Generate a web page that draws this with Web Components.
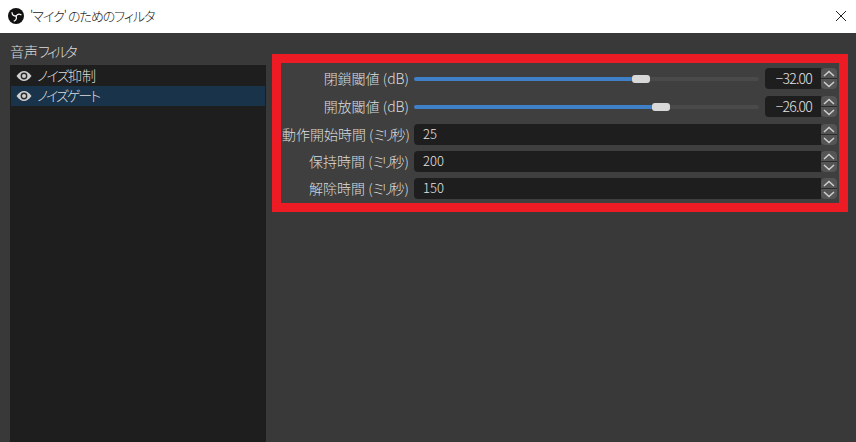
<!DOCTYPE html>
<html lang="ja"><head><meta charset="utf-8"><title>Filters</title>
<style>
html,body{margin:0;padding:0;width:856px;height:442px;overflow:hidden;background:#3a3939}
body{font:300 14px "Noto Sans CJK JP","Noto Sans",sans-serif;color:#dcdcdc;font-feature-settings:"palt"}
</style></head><body>
<obs-window>
  <obs-titlebar slot="top">'マイク' のためのフィルタ</obs-titlebar>
  <obs-filter-list slot="left" heading="音声フィルタ">
    <obs-filter-item>ノイズ抑制</obs-filter-item>
    <obs-filter-item selected>ノイズゲート</obs-filter-item>
  </obs-filter-list>
  <obs-props slot="right">
    <obs-row label="閉鎖閾値 (dB)"><obs-slider pct="63.5"></obs-slider><obs-spin value="-32.00" w="72" align="right"></obs-spin></obs-row>
    <obs-row label="開放閾値 (dB)"><obs-slider pct="69.3"></obs-slider><obs-spin value="-26.00" w="72" align="right"></obs-spin></obs-row>
    <obs-row label="動作開始時間 (ミリ秒)"><obs-spin value="25"></obs-spin></obs-row>
    <obs-row label="保持時間 (ミリ秒)"><obs-spin value="200"></obs-spin></obs-row>
    <obs-row label="解除時間 (ミリ秒)"><obs-spin value="150"></obs-spin></obs-row>
  </obs-props>
</obs-window>
<script>
const kana=(s,ls)=>s.replace(/[ァ-ヶー]+/g,m=>'<span style="letter-spacing:'+ls+'px">'+m+'</span>');
function def(name, css, html, lightInit){
  customElements.define(name, class extends HTMLElement{
    connectedCallback(){
      if(this.shadowRoot) return;
      if(lightInit) lightInit(this);
      const r=this.attachShadow({mode:'open'});
      r.innerHTML='<style>'+css+'</style>'+(typeof html==='function'?html(this):html);
    }
  });
}
def('obs-window',
 ':host{display:flex;flex-direction:column;width:856px;height:442px}'+
 '.body{flex:1;display:flex;min-height:0;background:#3a3939}',
 '<slot name="top"></slot><div class="body"><slot name="left"></slot><slot name="right"></slot></div>');
def('obs-titlebar',
 ':host{display:flex;align-items:center;height:33px;background:#fff;color:#222;flex:none;font-size:13px;letter-spacing:-1px}'+
 '.logo{width:16px;height:16px;margin:0 6px 0 8px;flex:none;position:relative;top:-1px}'+
 '.t{flex:1;position:relative;top:-1px;white-space:pre}'+
 '.x{width:12px;height:12px;margin-right:9px;flex:none;position:relative;top:-1px}',
 '<svg class="logo" viewBox="0 0 16 16"><circle cx="8" cy="8" r="8" fill="#111"/><g fill="none" stroke="#fff" stroke-width="1.2" stroke-linecap="round"><path d="M8 8C6 8 4.2 6.6 4 4.6"/><path d="M8 8C9.2 6.4 11.4 5.8 13 6.8"/><path d="M8 8C8.8 9.8 8 12 6.2 13"/></g></svg>'+
 '<span class="t"><slot></slot></span>'+
 '<svg class="x" viewBox="0 0 12 12"><path d="M1 1L11 11M11 1L1 11" stroke="#222" stroke-width="1" fill="none"/></svg>');
def('obs-filter-list',
 ':host{display:flex;flex-direction:column;width:256px;margin-left:10px;flex:none}'+
 '.h{height:32px;line-height:37px;color:#dcdcdc}'+
 '.l{flex:1;background:#1f1e1e;padding:1px;display:flex;flex-direction:column}',
 el=>'<div class="h">'+kana(el.getAttribute('heading'),-2.6)+'</div><div class="l"><slot></slot></div>');
def('obs-filter-item',
 ':host{display:flex;align-items:center;height:20px;color:#dcdcdc}'+
 ':host([selected]){background:#19334a}'+
 'svg{width:16px;height:10px;margin:0 5px 0 5px;flex:none}'+
 'span{position:relative;top:-1px}',
 '<svg viewBox="0 0 16 10"><path d="M0.5 5C3 1.4 5.4 0 8 0s5 1.4 7.5 5C13 8.6 10.6 10 8 10S3 8.6 0.5 5Z" fill="#cfcfcf"/><circle cx="8" cy="5" r="3.4" fill="#2a2a2a"/><circle cx="8" cy="5" r="2" fill="#cfcfcf"/></svg><span><slot></slot></span>',
 el=>{el.innerHTML=kana(el.textContent,el.hasAttribute('selected')?-2:-1.6)});
def('obs-props',
 ':host{flex:1;display:block;min-width:0}'+
 '.frame{margin:21px 8px 0 6px;border:9px solid #ed1c24;background:#3f3f3f;box-sizing:border-box;height:158px;padding:5px 2px 0 1px;display:flex;flex-direction:column}'+
 '::slotted(obs-row:nth-child(-n+2)){margin-bottom:7px}'+
 '::slotted(obs-row:nth-child(n+3):not(:last-child)){margin-bottom:6px}',
 '<div class="frame"><slot></slot></div>');
def('obs-row',
 ':host{display:flex;align-items:center;height:21px;flex:none}'+
 '.lab{width:127px;text-align:right;white-space:nowrap;flex:none;margin-right:5px;color:#dcdcdc;position:relative;top:-1px}'+
 '.c{flex:1;display:flex;align-items:center;gap:6px;min-width:0}',
 el=>'<div class="lab">'+kana(el.getAttribute('label'),-2.5)+'</div><div class="c"><slot></slot></div>');
def('obs-slider',
 ':host{flex:1;display:block;height:21px;min-width:0}'+
 '.wrap{position:relative;height:21px}'+
 '.g{position:absolute;left:0;right:0;top:9px;height:4px;background:#4a4a4a;border-radius:2px}'+
 '.f{position:absolute;left:0;top:9px;height:4px;background:#3f80c6;border-radius:2px}'+
 '.h{position:absolute;top:7px;width:18px;height:8px;background:#d8d8d8;border-radius:3px}',
 el=>{const p=parseFloat(el.getAttribute('pct'));
  return '<div class="wrap"><div class="g"></div><div class="f" style="width:'+p+'%"></div><div class="h" style="left:calc('+p+'% - 1px)"></div></div>';});
def('obs-spin',
 ':host{display:flex;height:21px;flex:1;min-width:0}'+
 ':host([w]){flex:none;width:72px}'+
 '.v{flex:1;min-width:0;box-sizing:border-box;background:#1f1e1e;border-radius:4px 0 0 4px;padding-left:9px;font:300 13px/20px "Noto Sans CJK JP","Noto Sans",sans-serif;color:#e4e4e4;font-feature-settings:"palt"}'+
 ':host([align=right]) .v{text-align:right;padding:0 9px 0 0;font-size:14px;letter-spacing:-.8px}'+
 '.b{width:16px;flex:none;display:flex;flex-direction:column;gap:1px;background:#2a2a2a;border-radius:4px}'+
 '.b div{flex:1;background:#555;display:flex;align-items:center;justify-content:center}'+
 '.b div:first-child{border-radius:4px 4px 0 0}.b div:last-child{border-radius:0 0 4px 4px}'+
 'svg{width:12px;height:7px}',
 el=>'<div class="v">'+el.getAttribute('value').replace('-','\u2212')+'</div><div class="b"><div><svg viewBox="0 0 12 7"><path d="M1 6L6 1.5L11 6" fill="none" stroke="#cfcfcf" stroke-width="1.5"/></svg></div><div><svg viewBox="0 0 12 7"><path d="M1 1L6 5.5L11 1" fill="none" stroke="#cfcfcf" stroke-width="1.5"/></svg></div></div>');
</script>
</body></html>
